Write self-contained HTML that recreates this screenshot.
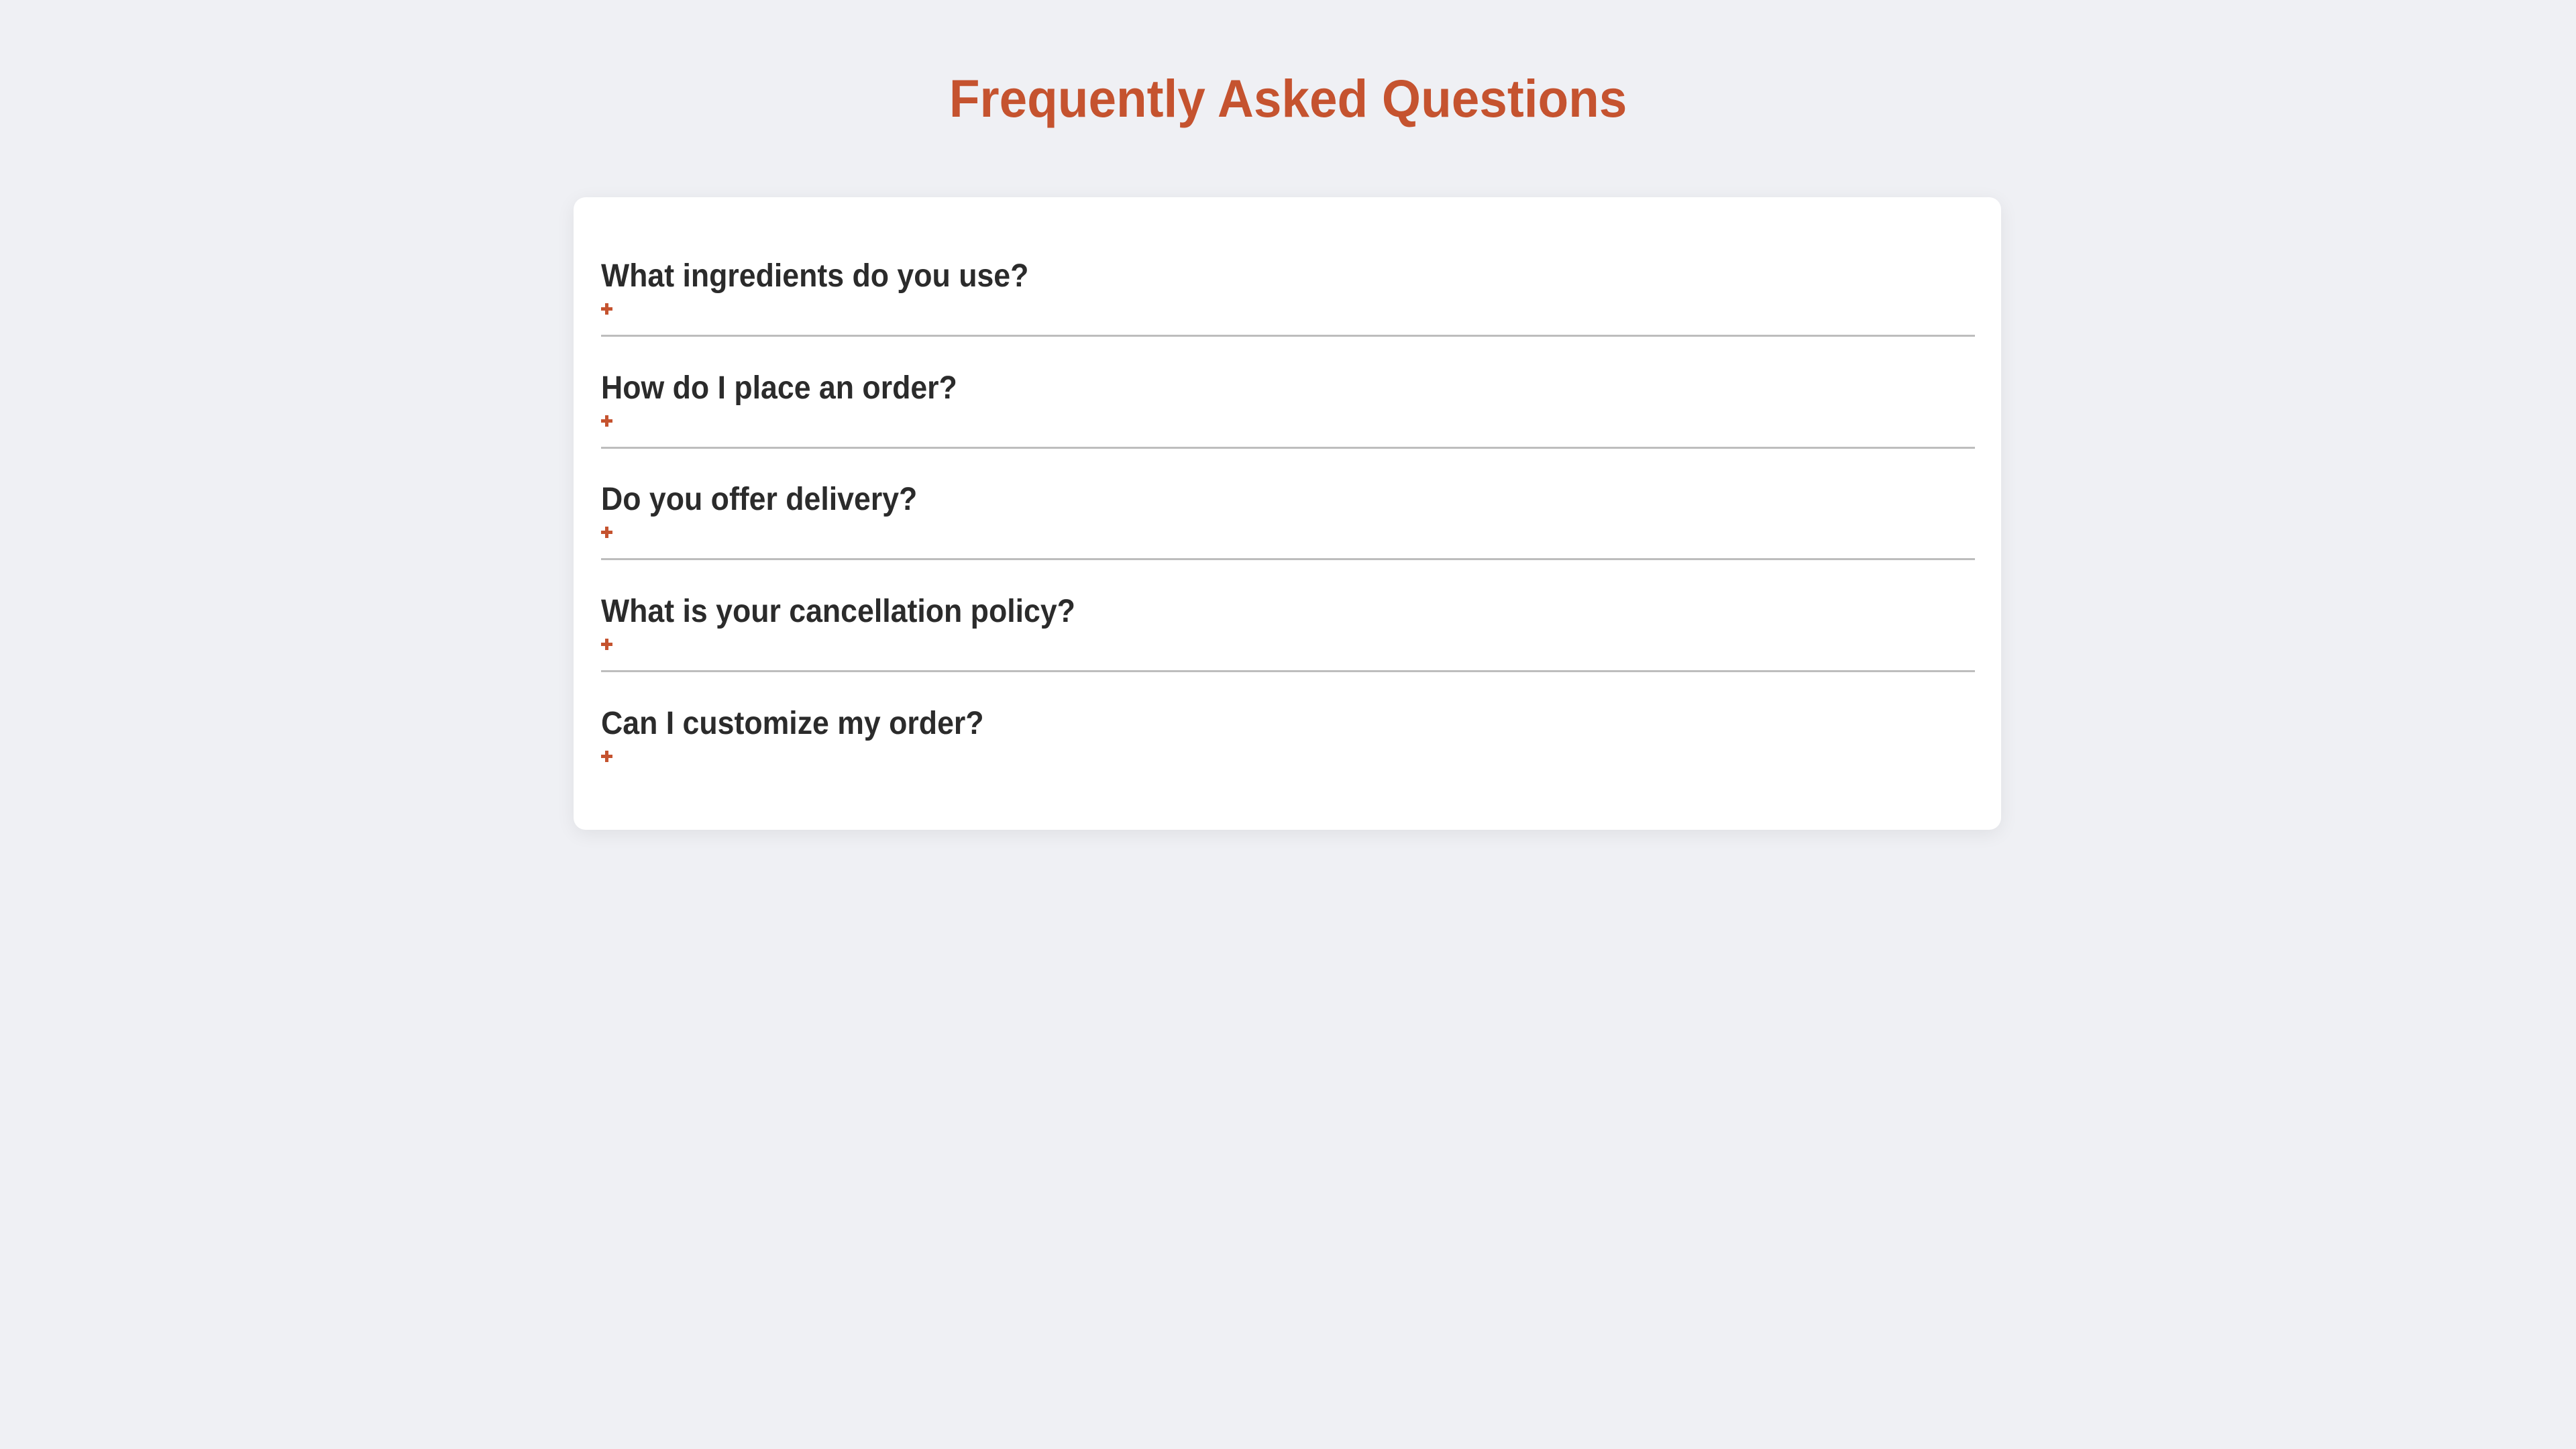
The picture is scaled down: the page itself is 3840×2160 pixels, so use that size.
<!DOCTYPE html>
<html><head><meta charset="utf-8">
<style>
html,body{margin:0;padding:0;}
body{width:3840px;height:2160px;background:#eff0f4;position:relative;overflow:hidden;font-family:"Liberation Sans",Arial,sans-serif;}
.title{position:absolute;left:0;width:3840px;top:107px;text-align:center;font-size:79px;line-height:1;font-weight:bold;color:#c5532f;}
.title span{display:inline-block;transform:scaleX(0.946);transform-origin:center;}
.card{position:absolute;left:855px;top:294px;width:2128px;height:943px;background:#fff;border-radius:18px;box-shadow:0 6px 28px rgba(0,0,0,0.07);}
.q{position:absolute;left:896px;font-size:48px;line-height:1;font-weight:bold;color:#2b2b2b;white-space:nowrap;transform:scaleX(0.93);transform-origin:left;}
.plus{position:absolute;left:896px;width:17px;height:17px;}
.plus:before{content:"";position:absolute;left:0;top:6px;width:17px;height:5px;background:#c5532f;}
.plus:after{content:"";position:absolute;left:6px;top:0;width:5px;height:17px;background:#c5532f;}
.line{position:absolute;left:896px;width:2048px;height:3px;background:#bdbdbd;}
</style></head><body>
<div class="title"><span>Frequently Asked Questions</span></div>
<div class="card"></div>

<div class="q" style="top:388px">What ingredients do you use?</div>
<div class="plus" style="top:452px"></div>
<div class="line" style="top:499px"></div>

<div class="q" style="top:555px">How do I place an order?</div>
<div class="plus" style="top:619px"></div>
<div class="line" style="top:666px"></div>

<div class="q" style="top:721px">Do you offer delivery?</div>
<div class="plus" style="top:785px"></div>
<div class="line" style="top:832px"></div>

<div class="q" style="top:888px">What is your cancellation policy?</div>
<div class="plus" style="top:952px"></div>
<div class="line" style="top:999px"></div>

<div class="q" style="top:1055px">Can I customize my order?</div>
<div class="plus" style="top:1119px"></div>
</body></html>
